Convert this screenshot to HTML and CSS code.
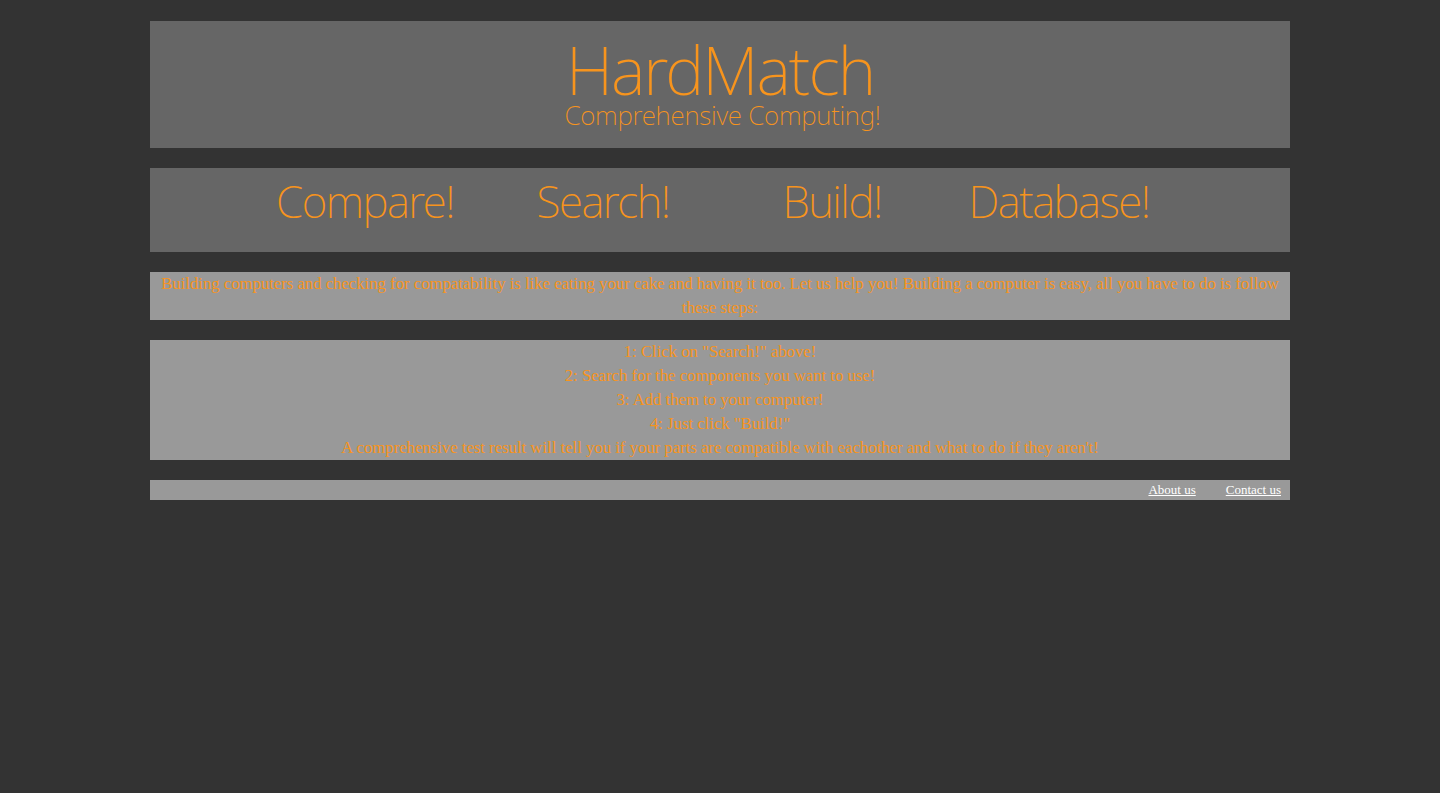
FILE: index.html
```html
<!DOCTYPE html>
<html>
<head>
<meta charset="utf-8">
<title>HardMatch</title>
<link rel="stylesheet" href="styles.css">
</head>
<body>
<div class="page">
  <header class="banner">
    <div class="logo">HardMatch</div>
    <div class="tagline">Comprehensive Computing!</div>
  </header>
  <nav class="menu">
    <a class="menu-item" href="#">Compare!</a>
    <a class="menu-item" href="#">Search!</a>
    <a class="menu-item" href="#">Build!</a>
    <a class="menu-item" href="#">Database!</a>
  </nav>
  <section class="box intro">
    Building computers and checking for compatability is like eating your cake and having it too. Let us help you! Building a computer is easy, all you have to do is follow these steps:
  </section>
  <section class="box steps">
    1: Click on "Search!" above!<br>
    2: Search for the components you want to use!<br>
    3: Add them to your computer!<br>
    4: Just click "Build!"<br>
    A comprehensive test result will tell you if your parts are compatible with eachother and what to do if they aren't!
  </section>
  <footer class="footer">
    <a href="#">About us</a>
    <a href="#">Contact us</a>
  </footer>
</div>
</body>
</html>
```

FILE: styles.css
```css
html, body {
  margin: 0;
  padding: 0;
  background: #333333;
}
body {
  font-family: "Liberation Serif", "Times New Roman", serif;
  font-size: 16.7px;
  color: #f7941d;
}
.page {
  width: 1140px;
  margin: 0 auto;
  padding-top: 21px;
  display: flex;
  flex-direction: column;
  gap: 20px;
}
.banner {
  background: #666666;
  height: 127px;
  display: flex;
  flex-direction: column;
  align-items: center;
  box-sizing: border-box;
  padding-top: 15px;
  font-family: "Noto Sans", "Open Sans", sans-serif;
  font-weight: 160;
}
.logo {
  font-size: 66px;
  line-height: 66px;
  color: #f7941d;
  letter-spacing: -2px;
}
.tagline {
  font-size: 26px;
  line-height: 26px;
  color: #f7941d;
  letter-spacing: -0.25px;
  margin-left: 5px;
}
.menu {
  background: #666666;
  height: 84px;
  display: grid;
  grid-template-columns: 238px 238px 220px 234px;
  padding-left: 96px;
  align-items: start;
  padding-top: 3px;
  box-sizing: border-box;
  font-family: "Noto Sans", "Open Sans", sans-serif;
  font-weight: 160;
}
.menu-item {
  text-align: center;
  font-size: 44px;
  line-height: 60px;
  color: #f7941d;
  text-decoration: none;
  letter-spacing: -1.5px;
}
.box {
  background: #999999;
  text-align: center;
  line-height: 24px;
  color: #f7941d;
}
.intro {
  padding: 0 8px;
}
.footer {
  background: #999999;
  height: 20px;
  display: flex;
  justify-content: flex-end;
  align-items: center;
  gap: 30px;
  padding-right: 9px;
  font-size: 13px;
}
.footer a {
  color: #ffffff;
  text-decoration: underline;
}
```
